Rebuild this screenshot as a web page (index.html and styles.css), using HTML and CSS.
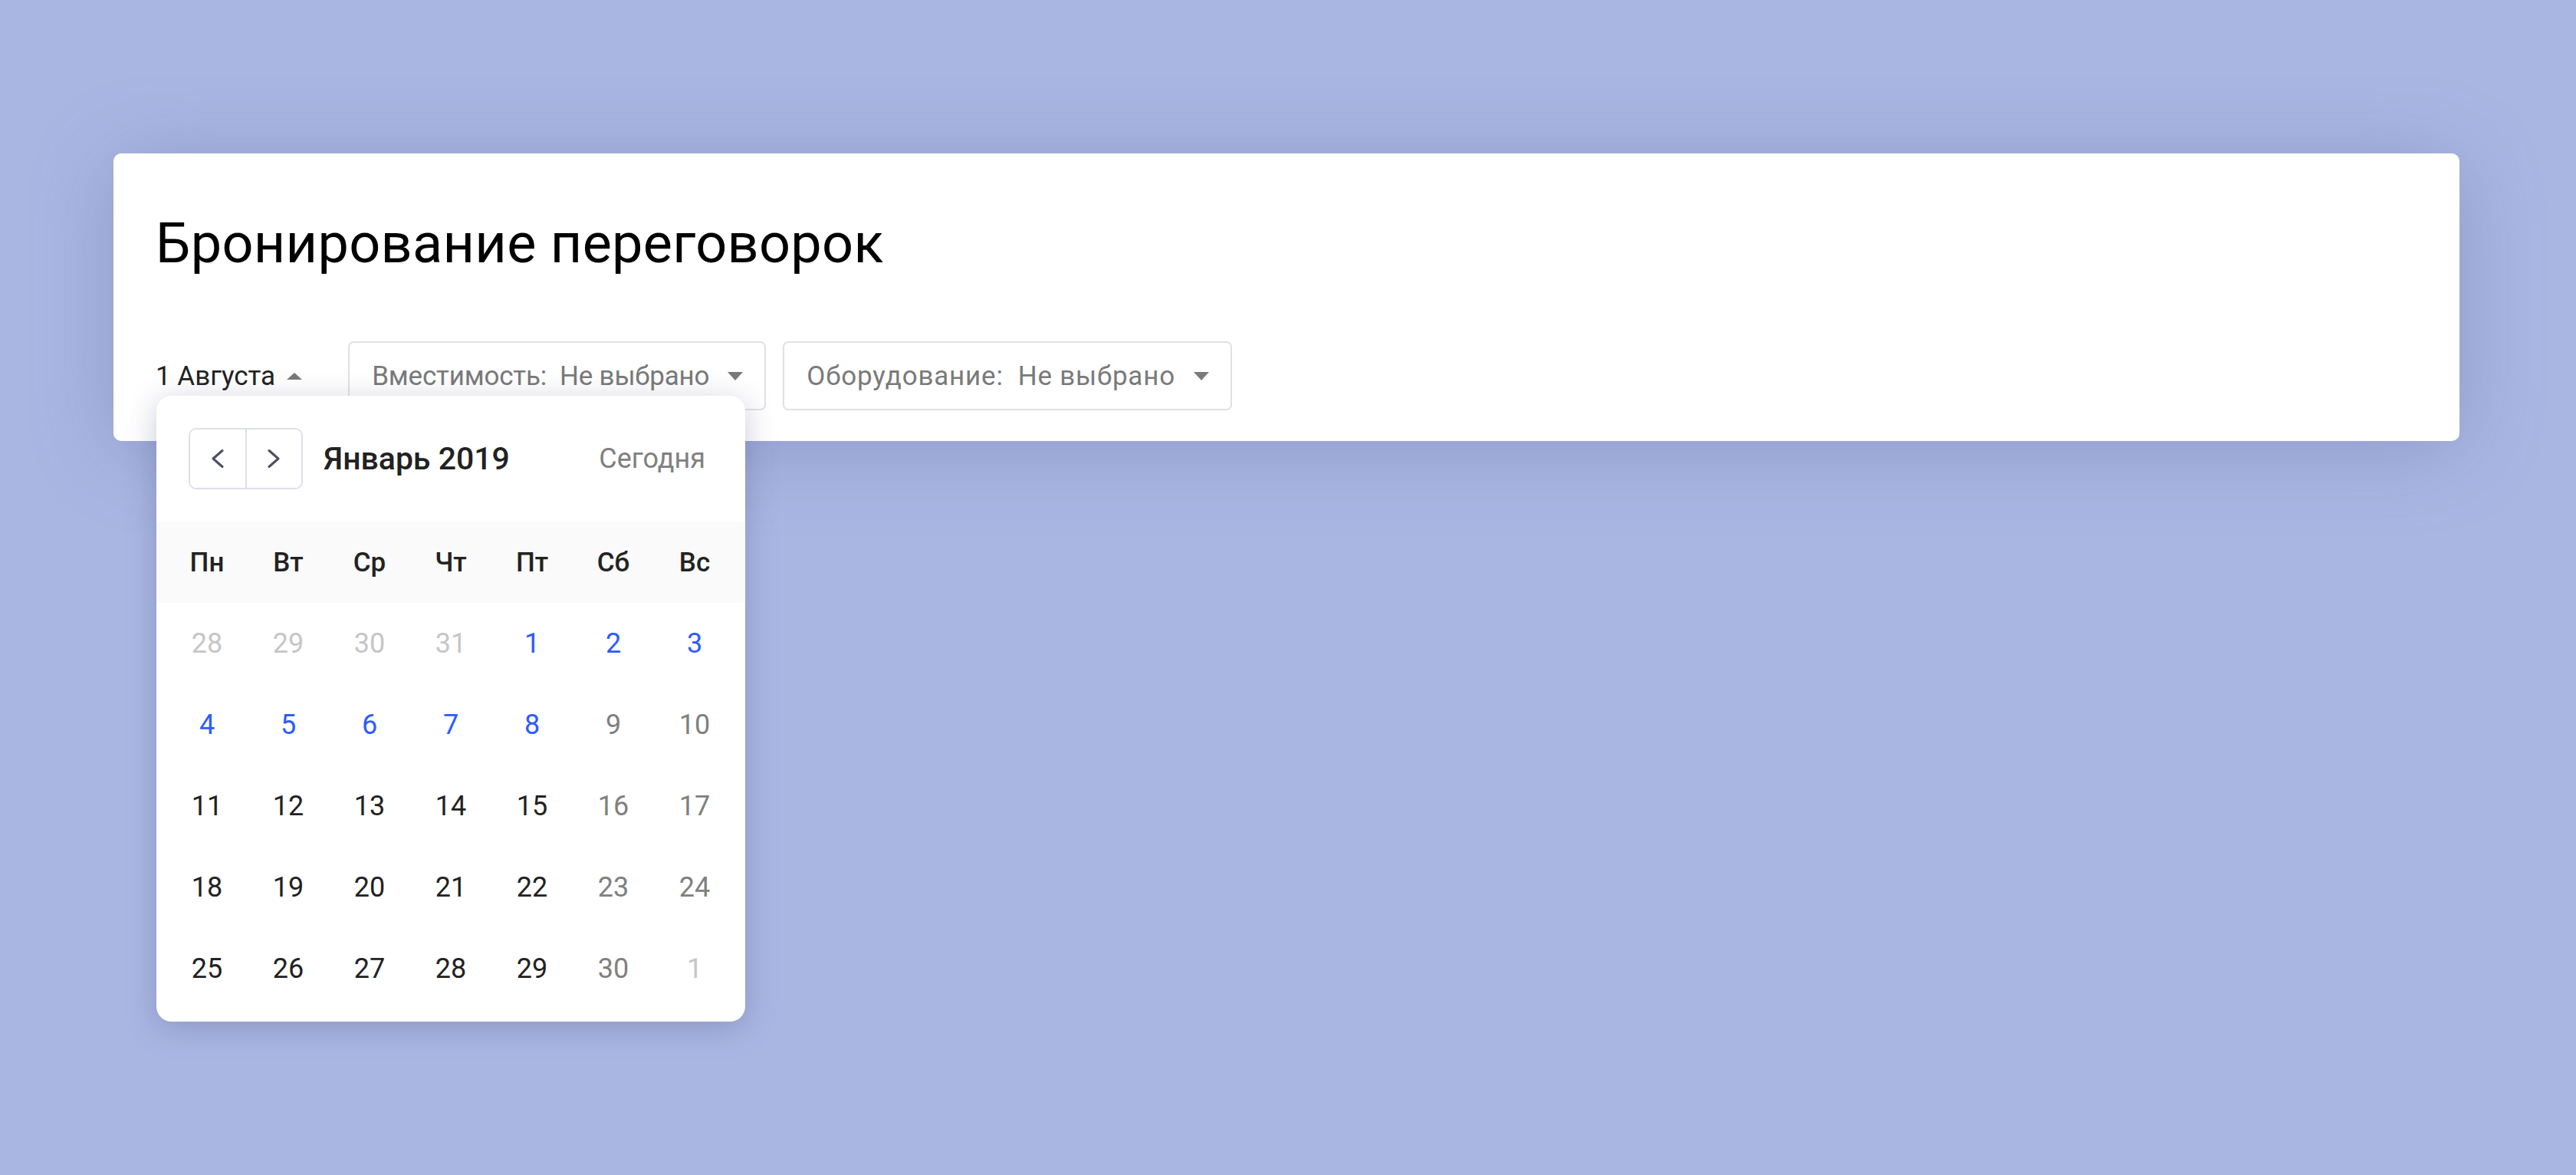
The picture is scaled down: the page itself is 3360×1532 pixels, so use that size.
FILE: index.html
```html
<!DOCTYPE html>
<html lang="ru">
<head>
<meta charset="utf-8">
<title>Бронирование переговорок</title>
<link rel="stylesheet" href="styles.css">
</head>
<body>
<div class="page">
  <section class="card">
    <h1 class="title">Бронирование переговорок</h1>
    <div class="filters">
      <div class="date-picker">
        <span class="date-label">1 Августа</span>
        <span class="tri-up"></span>
      </div>
      <div class="select select-capacity">
        <span class="select-text">Вместимость:&nbsp; Не выбрано</span>
        <span class="tri-down"></span>
      </div>
      <div class="select select-equip">
        <span class="select-text">Оборудование:&nbsp; Не выбрано</span>
        <span class="tri-down"></span>
      </div>

      <div class="calendar">
        <div class="cal-head">
          <div class="nav">
            <button class="nav-btn" aria-label="Назад">
              <svg width="16" height="24" viewBox="0 0 16 24"><polyline points="14,1.5 2,12 14,22.5" fill="none" stroke="#4b5163" stroke-width="3" stroke-linecap="round" stroke-linejoin="round"/></svg>
            </button>
            <button class="nav-btn" aria-label="Вперёд">
              <svg width="16" height="24" viewBox="0 0 16 24"><polyline points="2,1.5 14,12 2,22.5" fill="none" stroke="#4b5163" stroke-width="3" stroke-linecap="round" stroke-linejoin="round"/></svg>
            </button>
          </div>
          <div class="month">Январь 2019</div>
          <div class="today">Сегодня</div>
        </div>
        <div class="weekdays">
          <span>Пн</span><span>Вт</span><span>Ср</span><span>Чт</span><span>Пт</span><span>Сб</span><span>Вс</span>
        </div>
        <div class="days">
          <span class="d muted">28</span><span class="d muted">29</span><span class="d muted">30</span><span class="d muted">31</span><span class="d blue">1</span><span class="d blue">2</span><span class="d blue">3</span>
          <span class="d blue">4</span><span class="d blue">5</span><span class="d blue">6</span><span class="d blue">7</span><span class="d blue">8</span><span class="d wknd">9</span><span class="d wknd">10</span>
          <span class="d">11</span><span class="d">12</span><span class="d">13</span><span class="d">14</span><span class="d">15</span><span class="d wknd">16</span><span class="d wknd">17</span>
          <span class="d">18</span><span class="d">19</span><span class="d">20</span><span class="d">21</span><span class="d">22</span><span class="d wknd">23</span><span class="d wknd">24</span>
          <span class="d">25</span><span class="d">26</span><span class="d">27</span><span class="d">28</span><span class="d">29</span><span class="d wknd">30</span><span class="d muted">1</span>
        </div>
      </div>
    </div>
  </section>
</div>
</body>
</html>
```
FILE: styles.css
```css
* { box-sizing: border-box; }
html, body {
  margin: 0;
  padding: 0;
  background: #aab6e2;
  font-family: Roboto, "Noto Sans", "Liberation Sans", sans-serif;
  color: #222;
}
.page {
  width: 3360px;
  height: 1532px;
  padding: 200px 152px 0 148px;
}
.card {
  background: #fff;
  border-radius: 10px;
  height: 375px;
  padding: 0 55px;
  box-shadow: 0 10px 110px rgba(70, 82, 140, 0.28);
}
.title {
  margin: 0;
  padding-top: 76px;
  font-size: 72px;
  font-weight: 400;
  line-height: 84px;
  color: #000;
  letter-spacing: 0.3px;
}
.filters {
  position: relative;
  display: flex;
  align-items: center;
  margin-top: 85px;
  height: 90px;
}
.date-picker {
  display: flex;
  align-items: center;
  gap: 15px;
  margin-right: 60px;
  font-size: 35px;
  color: #222;
}
.tri-up {
  width: 0; height: 0;
  border-left: 10px solid transparent;
  border-right: 10px solid transparent;
  border-bottom: 9px solid #7a7a7a;
}
.tri-down {
  width: 0; height: 0;
  border-left: 10.5px solid transparent;
  border-right: 10.5px solid transparent;
  border-top: 11px solid #7a7a7a;
}
.select {
  display: flex;
  align-items: center;
  gap: 24px;
  height: 90px;
  padding: 0 28px 0 29px;
  border: 2px solid #e1e1e1;
  border-radius: 7px;
  margin-right: 22px;
  font-size: 35px;
  color: #7a7a7a;
  white-space: nowrap;
}
.select-capacity .select-text { letter-spacing: -0.2px; }
.select-equip .select-text { letter-spacing: 0.8px; }
.calendar {
  position: absolute;
  left: 1px;
  top: 71px;
  width: 768px;
  height: 816px;
  background: #fff;
  border-radius: 20px;
  box-shadow: 0 8px 40px rgba(60, 70, 120, 0.28);
  padding-top: 42px;
}
.cal-head {
  display: flex;
  align-items: center;
  height: 80px;
  padding: 0 52px 0 42px;
}
.nav {
  display: flex;
  width: 149px;
  height: 80px;
  border: 2px solid #dde0e8;
  border-radius: 10px;
  overflow: hidden;
}
.nav-btn {
  flex: 1;
  display: flex;
  align-items: center;
  justify-content: center;
  background: #fff;
  border: 0;
  padding: 0;
}
.nav-btn + .nav-btn { border-left: 2px solid #dde0e8; }
.month {
  margin-left: 27px;
  font-size: 41px;
  font-weight: 500;
  color: #222;
}
.today {
  margin-left: auto;
  font-size: 36px;
  color: #808080;
}
.weekdays, .days {
  display: grid;
  grid-template-columns: repeat(7, 106px);
  padding: 0 13px;
}
.weekdays {
  margin-top: 42px;
  height: 106px;
  background: #fafafa;
  align-items: center;
  justify-items: center;
  font-size: 35px;
  font-weight: 500;
  color: #222;
}
.days {
  grid-auto-rows: 106px;
  align-items: center;
  justify-items: center;
  font-size: 36px;
}
.d { color: #222; }
.d.muted { color: #c6c6c6; }
.d.blue { color: #2e5bff; }
.d.wknd { color: #808080; }
```
